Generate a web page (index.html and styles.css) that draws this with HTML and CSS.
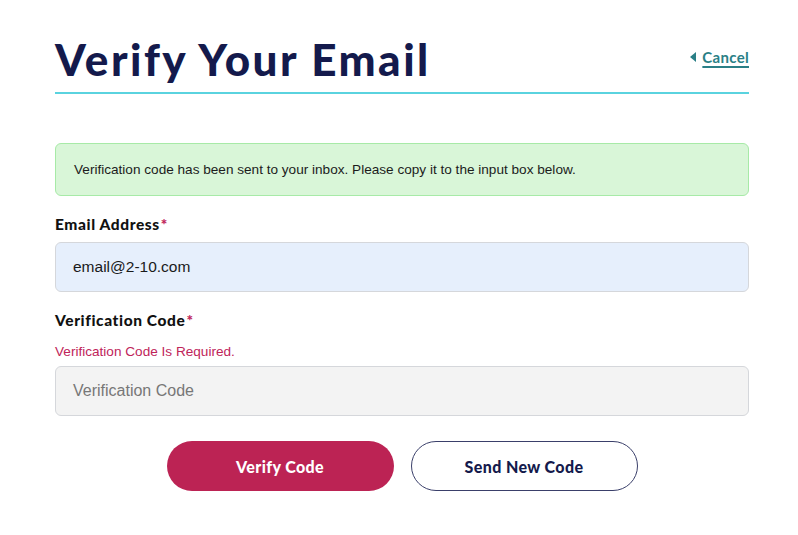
FILE: index.html
```html
<!DOCTYPE html>
<html lang="en">
<head>
<meta charset="utf-8">
<title>Verify Your Email</title>
<link rel="stylesheet" href="styles.css">
</head>
<body>
<main class="page">
  <header class="head">
    <h1 class="title">Verify Your Email</h1>
    <a class="cancel" href="#"><span class="tri"></span><span class="cancel-text">Cancel</span></a>
  </header>

  <div class="alert">Verification code has been sent to your inbox. Please copy it to the input box below.</div>

  <div class="field">
    <label class="label">Email Address<span class="req">*</span></label>
    <div class="input filled">email@2-10.com</div>
  </div>

  <div class="field">
    <label class="label">Verification Code<span class="req">*</span></label>
    <div class="error">Verification Code Is Required.</div>
    <div class="input empty">Verification Code</div>
  </div>

  <div class="actions">
    <button class="btn primary">Verify Code</button>
    <button class="btn outline">Send New Code</button>
  </div>
</main>
</body>
</html>
```

FILE: styles.css
```css
html, body {
  margin: 0;
  padding: 0;
  background: #ffffff;
}
body {
  font-family: "Liberation Sans", Arial, sans-serif;
  color: #1a1a1a;
}
.page {
  width: 694px;
  margin-left: 55px;
  padding-top: 29px;
}
.head {
  display: flex;
  align-items: center;
  justify-content: space-between;
  border-bottom: 2px solid #5ad3df;
  height: 63px;
}
.title {
  margin: 0;
  font-family: "Lato", sans-serif;
  font-weight: 900;
  font-size: 44px;
  color: #141a4c;
  letter-spacing: 2.5px;
  line-height: 1;
  margin-top: -3px;
}
.cancel {
  display: flex;
  align-items: center;
  gap: 6px;
  color: #2a7f86;
  text-decoration: none;
  margin-top: -8px;
}
.tri {
  width: 0;
  height: 0;
  border-top: 5px solid transparent;
  border-bottom: 5px solid transparent;
  border-right: 6px solid #2a7f86;
}
.cancel-text {
  font-family: "Lato", sans-serif;
  font-weight: 700;
  font-size: 15px;
  letter-spacing: 0.3px;
  text-decoration: underline;
  text-decoration-thickness: 2px;
  text-underline-offset: 3px;
}
.alert {
  margin-top: 49px;
  height: 53px;
  box-sizing: border-box;
  display: flex;
  align-items: center;
  padding: 0 18px;
  background: #d9f6d8;
  border: 1px solid #a7eaa7;
  border-radius: 6px;
  font-size: 13.6px;
  color: #1c1c1c;
}
.field {
  display: flex;
  flex-direction: column;
}
.label {
  font-family: "Lato", sans-serif;
  font-weight: 900;
  font-size: 15.5px;
  letter-spacing: 0.6px;
  color: #111111;
  margin-top: 19px;
  margin-bottom: 9px;
  line-height: 18px;
}
.req {
  color: #c0245a;
  margin-left: 1px;
}
.error {
  color: #c0245a;
  font-size: 13.6px;
  margin-top: 6px;
  margin-bottom: 6px;
  line-height: 16px;
}
.input {
  height: 50px;
  box-sizing: border-box;
  border: 1px solid #d5d7db;
  border-radius: 6px;
  display: flex;
  align-items: center;
  padding: 0 17px;
  font-size: 16px;
}
.input.filled {
  background: #e6effc;
  color: #1a1a1a;
  font-size: 15.5px;
}
.input.empty {
  background: #f3f3f3;
  color: #777777;
}
.actions {
  display: flex;
  justify-content: center;
  gap: 17px;
  margin-top: 25px;
}
.btn {
  width: 227px;
  height: 50px;
  border-radius: 25px;
  font-family: "Lato", sans-serif;
  font-weight: 900;
  font-size: 16px;
  letter-spacing: 0.4px;
  cursor: pointer;
}
.btn.primary {
  background: #bc2354;
  color: #ffffff;
  border: none;
}
.btn.outline {
  background: #ffffff;
  color: #141a4c;
  border: 1.5px solid #3a3f6a;
}
```
